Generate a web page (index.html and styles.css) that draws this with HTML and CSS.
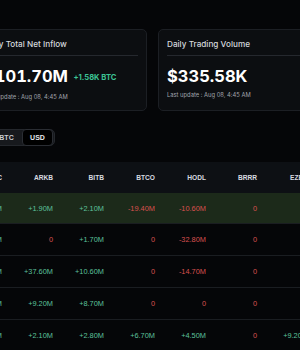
FILE: index.html
```html
<!DOCTYPE html>
<html>
<head>
<meta charset="utf-8">
<link rel="stylesheet" href="styles.css">
</head>
<body>
<div class="page">
  <div class="cards">
    <div class="card">
      <div class="card-title">Daily Total Net Inflow</div>
      <div class="card-divider"></div>
      <div class="card-value">$101.70M <span class="card-sub">+1.58K BTC</span></div>
      <div class="card-update">Last update : Aug 08, 4:45 AM</div>
    </div>
    <div class="card">
      <div class="card-title">Daily Trading Volume</div>
      <div class="card-divider"></div>
      <div class="card-value">$335.58K</div>
      <div class="card-update">Last update : Aug 08, 4:45 AM</div>
    </div>
  </div>
  <div class="toggle">
    <button class="toggle-btn">BTC</button>
    <button class="toggle-btn active">USD</button>
  </div>
  <div class="table">
    <div class="row head">
      <div>FBTC</div><div>ARKB</div><div>BITB</div><div>BTCO</div><div>HODL</div><div>BRRR</div><div>EZBC</div>
    </div>
    <div class="row hl">
      <div class="pos">+3.10M</div><div class="pos">+1.90M</div><div class="pos">+2.10M</div><div class="neg">-19.40M</div><div class="neg">-10.60M</div><div class="neg">0</div><div class="neg">0</div>
    </div>
    <div class="row">
      <div class="pos">+5.20M</div><div class="neg">0</div><div class="pos">+1.70M</div><div class="neg">0</div><div class="neg">-32.80M</div><div class="neg">0</div><div class="neg">0</div>
    </div>
    <div class="row">
      <div class="pos">+8.40M</div><div class="pos">+37.60M</div><div class="pos">+10.60M</div><div class="neg">0</div><div class="neg">-14.70M</div><div class="neg">0</div><div class="neg">0</div>
    </div>
    <div class="row">
      <div class="pos">+4.80M</div><div class="pos">+9.20M</div><div class="pos">+8.70M</div><div class="neg">0</div><div class="neg">0</div><div class="neg">0</div><div class="neg">0</div>
    </div>
    <div class="row">
      <div class="pos">+6.30M</div><div class="pos">+2.10M</div><div class="pos">+2.80M</div><div class="pos">+6.70M</div><div class="pos">+4.50M</div><div class="neg">0</div><div class="pos">+9.20M</div>
    </div>
  </div>
</div>
</body>
</html>
```
FILE: styles.css
```css
html, body {
  margin: 0;
  padding: 0;
  background: #050608;
  overflow: hidden;
  width: 300px;
  height: 350px;
}
body {
  font-family: Inter, "Liberation Sans", sans-serif;
  color: #e6e8eb;
}
.page {
  margin-left: -25px;
  width: 400px;
  padding-top: 29px;
}
.cards {
  display: flex;
  gap: 11px;
}
.card {
  width: 172px;
  box-sizing: border-box;
  background: #0c0e11;
  border: 1px solid #1c1f24;
  border-radius: 5px;
  padding: 9px 8px 8px 8px;
}
.card-title {
  font-size: 8.2px;
  line-height: 11px;
  font-weight: 500;
  color: #d4d7dc;
}
.card-divider {
  height: 1px;
  background: #25282e;
  margin-top: 5px;
}
.card-value {
  margin-top: 9px;
  font-size: 16.5px;
  line-height: 22px;
  font-weight: 700;
  color: #ffffff;
  white-space: nowrap;
  font-variant-numeric: tabular-nums;
}
.card-sub {
  font-size: 7.6px;
  color: #3cc394;
  margin-left: 1px;
  vertical-align: 2px;
  font-variant-numeric: normal;
}
.card-update {
  margin-top: 3px;
  font-size: 5.8px;
  line-height: 10px;
  color: #a0a5ad;
}
.toggle {
  margin-top: 18px;
  margin-left: 15px;
  display: inline-flex;
  background: #17191d;
  border: 1px solid #24272c;
  border-radius: 5px;
  padding: 0 1px 0 0;
  height: 17px;
  box-sizing: border-box;
}
.toggle-btn {
  width: 31px;
  height: 17px;
  margin-top: -1px;
  border: 1px solid transparent;
  background: transparent;
  color: #c9ccd1;
  font-family: "Liberation Sans", sans-serif;
  font-size: 7px;
  font-weight: 700;
  padding: 0;
  border-radius: 4px;
}
.toggle-btn.active {
  background: #000000;
  border-color: #2a2d33;
  color: #e6e8eb;
}
.table {
  margin-top: 16px;
  margin-left: -23px;
  width: 420px;
  font-family: "Liberation Sans", sans-serif;
}
.row {
  display: grid;
  grid-template-columns: repeat(7, 51px);
  height: 32px;
  align-items: center;
  border-bottom: 1px solid #1a1d21;
  box-sizing: border-box;
  font-size: 7.4px;
}
.row > div {
  text-align: right;
  padding-right: 1px;
}
.row.head {
  background: #0d1014;
  height: 31px;
  border-bottom: none;
  color: #d8dbe0;
  font-weight: 700;
  font-size: 6.6px;
}
.row.hl {
  background: #1c2a1a;
  height: 31px;
}
.pos { color: #5cc09c; }
.neg { color: #d9504f; }
```
